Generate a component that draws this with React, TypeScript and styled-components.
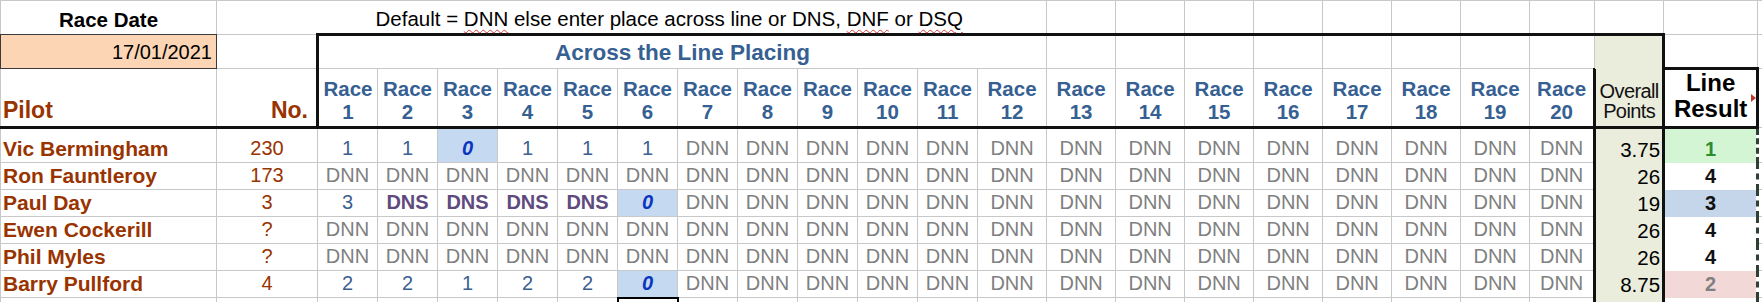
import React from "react";
import styled, { createGlobalStyle, css } from "styled-components";

const GlobalStyle = createGlobalStyle`
  html, body {
    margin: 0;
    padding: 0;
    overflow: hidden;
    background: #ffffff;
  }
`;

const grid = "#c8c8c8";
const thick = "3px solid #111";

type Edges = { $t?: boolean; $r?: boolean; $b?: boolean; $l?: boolean };

const DNN = Array.from({ length: 14 }, () => "DNN");
const allDnn = Array.from({ length: 20 }, () => "DNN");

type Tone = "win" | "plain" | "third" | "second";

const pilots: { name: string; no: string; res: string[]; pts: string; line: string; tone: Tone }[] = [
  { name: "Vic Bermingham", no: "230", res: ["1", "1", "0", "1", "1", "1", ...DNN], pts: "3.75", line: "1", tone: "win" },
  { name: "Ron Fauntleroy", no: "173", res: allDnn, pts: "26", line: "4", tone: "plain" },
  { name: "Paul Day", no: "3", res: ["3", "DNS", "DNS", "DNS", "DNS", "0", ...DNN], pts: "19", line: "3", tone: "third" },
  { name: "Ewen Cockerill", no: "?", res: allDnn, pts: "26", line: "4", tone: "plain" },
  { name: "Phil Myles", no: "?", res: allDnn, pts: "26", line: "4", tone: "plain" },
  { name: "Barry Pullford", no: "4", res: ["2", "2", "1", "2", "2", "0", ...DNN], pts: "8.75", line: "2", tone: "second" },
];

const colWidths = [
  216, 101,
  ...Array.from({ length: 11 }, () => 60),
  ...Array.from({ length: 8 }, () => 69),
  65, 69, 94, 5,
];

const races = Array.from({ length: 20 }, (_, i) => i + 1);

export default function App() {
  return (
    <>
      <GlobalStyle />
      <Sheet>
        <colgroup>
          {colWidths.map((w, i) => (
            <col key={i} style={{ width: w }} />
          ))}
        </colgroup>
        <tbody>
          <Row $h={34}>
            <LabelCell>Race Date</LabelCell>
            <GapCell />
            <NoteCell colSpan={12} $b>
              Default = <Squiggle>DNN</Squiggle> else enter place across line or DNS, <Squiggle>DNF</Squiggle> or{" "}
              <Squiggle>DSQ</Squiggle>
            </NoteCell>
            {races.slice(12).map((r) => (
              <Cell key={r} $b />
            ))}
            <Cell $b />
            <Cell />
            <Cell />
          </Row>
          <Row $h={34}>
            <DateCell>17/01/2021</DateCell>
            <Cell />
            <TitleCell colSpan={12} $l>
              Across the Line Placing
            </TitleCell>
            {races.slice(12).map((r) => (
              <Cell key={r} />
            ))}
            <PointsTop $r />
            <Cell $b />
            <Cell />
          </Row>
          <Row $h={58}>
            <PilotHead $b>Pilot</PilotHead>
            <NoHead $b>No.</NoHead>
            {races.map((r) => (
              <RaceHead key={r} $b $l={r === 1} $r={r === 20}>
                Race
                <br />
                {r}
              </RaceHead>
            ))}
            <PointsHead $l $r $b>
              Overall
              <br />
              Points
            </PointsHead>
            <ResultHead $t $l $r $b>
              Line
              <br />
              Result
              <Marker />
            </ResultHead>
            <Cell />
          </Row>
          {pilots.map((p, i) => (
            <Row key={p.name} $h={i === 0 ? 35 : 27}>
              <NameCell>{p.name}</NameCell>
              <NumCell>{p.no}</NumCell>
              {p.res.map((v, j) => (
                <RaceCell key={j} $kind={kindOf(v)} $r={j === 19}>
                  {v}
                </RaceCell>
              ))}
              <PointsCell $l $r>
                {p.pts}
              </PointsCell>
              <ResultCell $tone={p.tone}>{p.line}</ResultCell>
              <Cell />
            </Row>
          ))}
          <Row $h={27}>
            <Cell />
            <Cell />
            {races.map((r) => (r === 6 ? <ActiveCell key={r} /> : <Cell key={r} $r={r === 20} />))}
            <PointsCell $l $r />
            <ResultCell $tone="plain" />
            <Cell />
          </Row>
        </tbody>
      </Sheet>
    </>
  );
}

type Kind = "muted" | "flag" | "zero" | "place";

function kindOf(v: string): Kind {
  if (v === "DNN") return "muted";
  if (v === "DNS" || v === "DNF" || v === "DSQ") return "flag";
  if (v === "0") return "zero";
  return "place";
}

const Sheet = styled.table`
  border-collapse: collapse;
  table-layout: fixed;
  width: 1762px;
  font-family: "Liberation Sans", Arial, sans-serif;
  border-top: 1px solid #9c9c9c;
  border-left: 1px solid #9c9c9c;
`;

const Row = styled.tr<{ $h: number }>`
  height: ${(p) => p.$h}px;
`;

const Cell = styled.td<Edges>`
  position: relative;
  border: 1px solid ${grid};
  padding: 0 3px 2px;
  vertical-align: bottom;
  white-space: nowrap;
  overflow: visible;
  font-size: 20px;
  line-height: 23px;
  color: #000;
  ${(p) => p.$t && css`border-top: ${thick};`}
  ${(p) => p.$r && css`border-right: ${thick};`}
  ${(p) => p.$b && css`border-bottom: ${thick};`}
  ${(p) => p.$l && css`border-left: ${thick};`}
`;

const LabelCell = styled(Cell)`
  text-align: center;
  font-weight: bold;
  font-size: 20.5px;
  padding-bottom: 3px;
  border-bottom-color: #3a3a3a;
`;

const GapCell = styled(Cell)`
  border-right: none;
`;

const NoteCell = styled(Cell)`
  border-left: none;
  padding-left: 58px;
  padding-bottom: 3px;
  font-size: 20.5px;
`;

const Squiggle = styled.span`
  text-decoration: underline wavy #d83a3a;
  text-decoration-thickness: 1px;
  text-underline-offset: 3px;
`;

const DateCell = styled(Cell)`
  background: #fcd5b4;
  border: 1px solid #3a3a3a;
  text-align: right;
  padding-right: 4px;
  padding-bottom: 4px;
`;

const TitleCell = styled(Cell)`
  text-align: center;
  font-weight: bold;
  font-size: 22.5px;
  color: #366092;
  padding-bottom: 4px;
`;

const PointsTop = styled(Cell)`
  background: #eaecdc;
  border-bottom: none;
`;

const PilotHead = styled(Cell)`
  font-weight: bold;
  font-size: 23px;
  color: #993300;
  padding-left: 2px;
  padding-bottom: 4px;
`;

const NoHead = styled(PilotHead)`
  text-align: right;
  padding-right: 8px;
`;

const RaceHead = styled(Cell)`
  text-align: center;
  font-weight: bold;
  font-size: 20.5px;
  line-height: 22.5px;
  color: #366092;
  padding: 0 0 3px;
`;

const PointsHead = styled(Cell)`
  background: #eaecdc;
  border-top: none;
  text-align: center;
  font-size: 20px;
  line-height: 19.5px;
  letter-spacing: -0.6px;
  color: #111;
  padding: 0 0 5px;
`;

const ResultHead = styled(Cell)`
  text-align: center;
  font-weight: bold;
  font-size: 24px;
  line-height: 26px;
  padding: 0 0 4px;
`;

const Marker = styled.span`
  position: absolute;
  right: 0;
  top: 24px;
  width: 0;
  height: 0;
  border-top: 4px solid transparent;
  border-bottom: 4px solid transparent;
  border-left: 5px solid #c0392b;
`;

const NameCell = styled(Cell)`
  font-weight: bold;
  font-size: 21px;
  color: #993300;
  padding-left: 2px;
`;

const NumCell = styled(Cell)`
  text-align: center;
  color: #993300;
`;

const kindStyles: Record<Kind, ReturnType<typeof css>> = {
  muted: css`
    color: #808080;
  `,
  flag: css`
    color: #5f4a7d;
    font-weight: bold;
  `,
  zero: css`
    color: #0a35c0;
    font-weight: bold;
    font-style: italic;
    background: #c5d9f1;
  `,
  place: css`
    color: #3b5f8f;
  `,
};

const RaceCell = styled(Cell)<{ $kind: Kind }>`
  text-align: center;
  padding: 0 0 2px;
  ${(p) => kindStyles[p.$kind]}
`;

const PointsCell = styled(Cell)`
  background: #eaecdc;
  border-top: none;
  border-bottom: none;
  text-align: right;
  font-size: 20.5px;
  padding-right: 2px;
`;

const toneStyles: Record<Tone, ReturnType<typeof css>> = {
  win: css`
    background: #d3f5d3;
    color: #2e8b2e;
  `,
  plain: css`
    background: #ffffff;
    color: #111;
  `,
  third: css`
    background: #c5d5ea;
    color: #111;
  `,
  second: css`
    background: #f2d9d8;
    color: #808080;
  `,
};

const ResultCell = styled(Cell)<{ $tone: Tone }>`
  border-top: none;
  border-bottom: none;
  border-right: 3px dashed #2f3f33;
  text-align: center;
  font-weight: bold;
  ${(p) => toneStyles[p.$tone]}
`;

const ActiveCell = styled(Cell)`
  border: 2px solid #000;
`;
